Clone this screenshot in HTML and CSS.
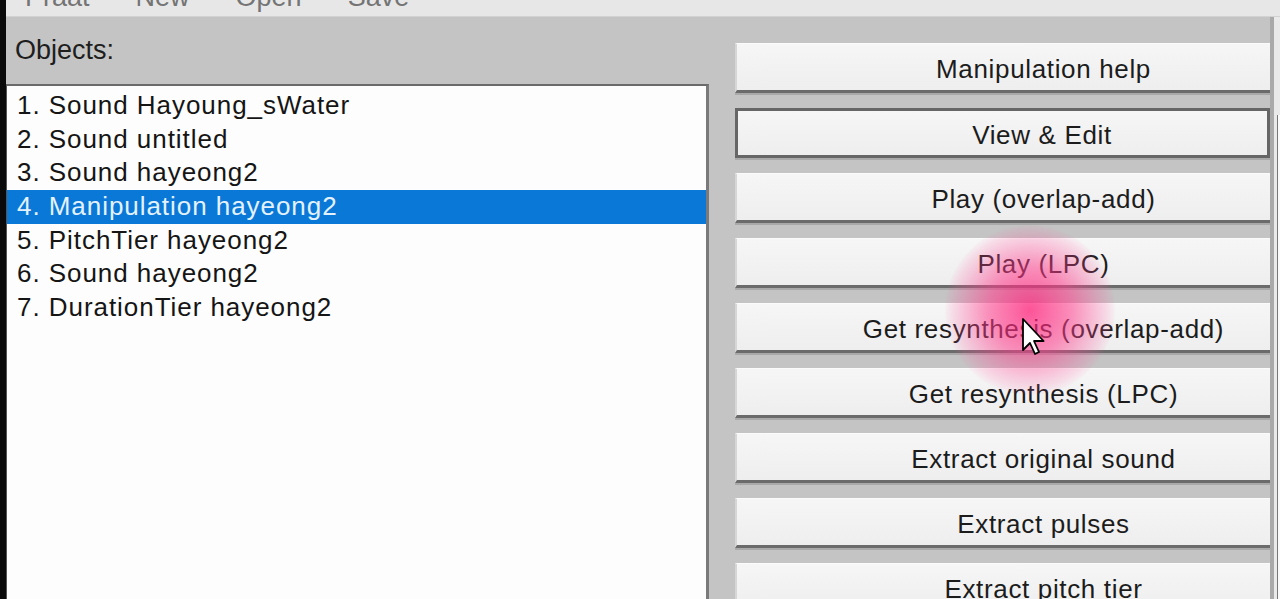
FILE: index.html
```html
<!DOCTYPE html>
<html lang="en">
<head>
    <meta charset="UTF-8">
    <meta name="viewport" content="width=device-width, initial-scale=1.0">
    <title>Praat Objects</title>
    <link rel="stylesheet" href="styles.css">
</head>
<body>
    <div class="desk">
        <div class="edge"></div>
        <div class="window">
            <div class="menubar">
                <div class="menu-items">
                    <span>Praat</span>
                    <span>New</span>
                    <span>Open</span>
                    <span>Save</span>
                </div>
            </div>
            <div class="content">
                <div class="objects">
                    <div class="label">Objects:</div>
                    <ul class="list">
                        <li>1. Sound Hayoung_sWater</li>
                        <li>2. Sound untitled</li>
                        <li>3. Sound hayeong2</li>
                        <li class="selected">4. Manipulation hayeong2</li>
                        <li>5. PitchTier hayeong2</li>
                        <li>6. Sound hayeong2</li>
                        <li>7. DurationTier hayeong2</li>
                    </ul>
                </div>
                <div class="actions">
                    <button>Manipulation help</button>
                    <button class="focused">View &amp; Edit</button>
                    <button>Play (overlap-add)</button>
                    <button>Play (LPC)</button>
                    <button>Get resynthesis (overlap-add)</button>
                    <button>Get resynthesis (LPC)</button>
                    <button>Extract original sound</button>
                    <button>Extract pulses</button>
                    <button>Extract pitch tier</button>
                </div>
                <div class="scroll-edge">
                    <div class="scroll-box"></div>
                </div>
            </div>
        </div>
    </div>

    <!-- cursor highlight from the screen recording -->
    <div class="glow"></div>
    <svg class="cursor" width="24" height="38" viewBox="0 0 12 19">
        <path d="M0.5 0.5 L0.5 16 L4 12.5 L6.5 18 L8.5 17 L6 11.5 L10.8 11.5 Z" fill="#fff" stroke="#000" stroke-width="0.9" stroke-linejoin="round"/>
    </svg>
</body>
</html>
```

FILE: styles.css
```css
body {
    margin: 0;
    font-family: 'Liberation Sans', Arial, sans-serif;
    background-color: #c4c4c4;
    overflow: hidden;
}
.desk {
    display: flex;
    height: 599px;
}
.edge {
    width: 6px;
    background: #0a0a0a;
}
.window {
    flex: 1;
    display: flex;
    flex-direction: column;
}
.menubar {
    height: 16px;
    background: #e7e7e7;
    border-bottom: 1px solid #d2d2d2;
    overflow: hidden;
}
.menu-items {
    margin-top: -16px;
    padding-left: 19px;
    font-size: 27px;
    line-height: 27px;
    color: #747474;
    display: flex;
    gap: 46px;
}
.content {
    flex: 1;
    display: flex;
    background: #c4c4c4;
    overflow: hidden;
}
.objects {
    width: 703px;
    display: flex;
    flex-direction: column;
}
.label {
    height: 67px;
    padding-left: 9px;
    font-size: 27px;
    line-height: 30px;
    padding-top: 18px;
    box-sizing: border-box;
    color: #1e1e1e;
}
.list {
    flex: 1;
    margin: 0;
    padding: 3px 0 0 0;
    list-style: none;
    background: #fdfdfd;
    border-top: 2px solid #6a6a6a;
    border-left: 1px solid #555;
    border-right: 3px solid #7a7a7a;
}
.list li {
    height: 33.7px;
    line-height: 33.7px;
    padding-left: 10px;
    font-size: 26px;
    letter-spacing: 0.95px;
    color: #151515;
    white-space: nowrap;
}
.list li.selected {
    background: #0a78d7;
    color: #e4f2ff;
}
.actions {
    width: 535px;
    margin-left: 26px;
    padding-top: 26px;
    display: flex;
    flex-direction: column;
    gap: 15px;
}
.actions button {
    flex: none;
    height: 50px;
    padding: 5px 0 0 80px;
    font-family: inherit;
    font-size: 26px;
    letter-spacing: 0.65px;
    color: #1c1c1c;
    background: linear-gradient(#f6f6f6, #eeeeee);
    border: none;
    border-top: 1px solid #fbfbfb;
    border-left: 2px solid #d6d6d6;
    border-bottom: 3px solid #6b6b6b;
    box-shadow: 0 2px 0 #a9a9a9;
}
.actions button.focused {
    border: 3px solid #666;
    padding-left: 79px;
}
.scroll-edge {
    flex: 1;
    border-left: 4px solid #a9a9a9;
    background: #e9e9e9;
    padding-top: 98px;
}
.scroll-box {
    height: 100%;
    margin-left: 3px;
    border-left: 1px solid #777;
    background: #fafafa;
}
.glow {
    position: absolute;
    left: 945px;
    top: 225px;
    width: 170px;
    height: 170px;
    border-radius: 50%;
    background: radial-gradient(circle, rgba(255, 30, 120, 0.75) 0%, rgba(255, 60, 140, 0.55) 35%, rgba(255, 90, 160, 0.15) 65%, rgba(255, 120, 180, 0) 72%);
}
.cursor {
    position: absolute;
    left: 1022px;
    top: 318px;
}
```
